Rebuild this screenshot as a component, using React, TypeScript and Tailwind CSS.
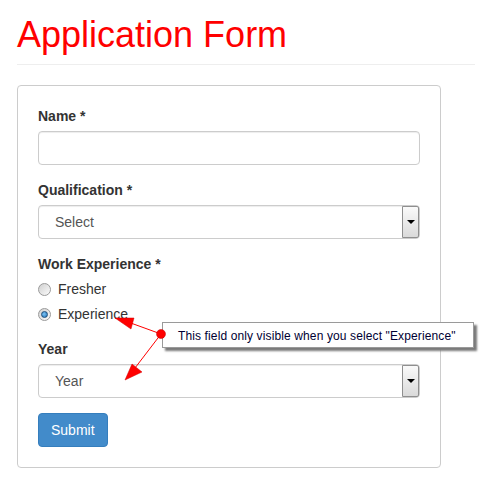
import React from "react";

function FakeSelect({ value }: { value: string }) {
  return (
    <div className="flex h-[34px] w-full items-stretch rounded border border-[#ccc] bg-white shadow-[inset_0_1px_1px_rgba(0,0,0,0.075)]">
      <div className="flex flex-1 items-center pl-[16px] pt-[2px] text-[14px] text-[#555]">{value}</div>
      <div className="flex w-[17px] items-center justify-center rounded-r-[2px] border border-[#8f8f8f] bg-[linear-gradient(180deg,#fafafa,#dadada)]">
        <div className="h-0 w-0 border-x-[4px] border-t-[4px] border-x-transparent border-t-black" />
      </div>
    </div>
  );
}

function Radio({ label, checked }: { label: string; checked?: boolean }) {
  return (
    <div className="flex h-5 items-center">
      <span className="mt-[1px] flex h-[13px] w-[13px] items-center justify-center rounded-full border border-[#9a9a9a] bg-[linear-gradient(135deg,#d0d0d0,#fbfbfb)]">
        {checked && (
          <span className="h-[7px] w-[7px] rounded-full border border-[#1d4f7c] bg-[radial-gradient(circle_at_40%_40%,#7cc4f5,#1f6fb5)]" />
        )}
      </span>
      <span className="ml-[7px] pt-[2px] text-[14px] text-[#333]">{label}</span>
    </div>
  );
}

export default function App() {
  return (
    <div className="relative h-[485px] w-[485px] overflow-hidden bg-white font-['Liberation_Sans',Arial,sans-serif] text-[#333]">
      <div className="ml-[17px] w-[458px]">
        <div className="border-b border-[#eee] pb-[9px] pt-[15px]">
          <h1 className="text-[36px] leading-[1.1] text-[#ff0000]">Application Form</h1>
        </div>

        <div className="mt-5 w-[424px] rounded border border-[#ccc] p-5">
          <div className="mb-[5px] text-[14px] font-bold leading-5">Name *</div>
          <div className="h-[34px] w-full rounded border border-[#ccc] shadow-[inset_0_1px_1px_rgba(0,0,0,0.075)]" />

          <div className="mb-[5px] mt-[15px] text-[14px] font-bold leading-5">Qualification *</div>
          <FakeSelect value="Select" />

          <div className="mb-[5px] mt-[15px] text-[14px] font-bold leading-5">Work Experience *</div>
          <div className="flex flex-col gap-[5px]">
            <Radio label="Fresher" />
            <Radio label="Experience" checked />
          </div>

          <div className="mb-[5px] mt-[15px] text-[14px] font-bold leading-5">Year</div>
          <FakeSelect value="Year" />

          <button className="mt-[15px] h-[34px] rounded border border-[#357ebd] bg-[#428bca] px-3 pt-[2px] text-[14px] text-white">
            Submit
          </button>
        </div>
      </div>

      {/* annotation */}
      <div className="absolute left-[162px] top-[322px] flex h-[26px] w-[312px] items-center border border-[#9a9a9a] bg-white pl-[15px] pt-[1px] text-[12px] tracking-[0.12px] text-[#000033] shadow-[3px_3px_2px_#7a7a7a]">
        This field only visible when you select "Experience"
      </div>
      <svg className="pointer-events-none absolute left-0 top-0" width="485" height="485" viewBox="0 0 485 485">
        <line x1="161" y1="334" x2="128" y2="322" stroke="#ff0000" strokeWidth="1" />
        <line x1="161" y1="334" x2="135" y2="368" stroke="#ff0000" strokeWidth="1" />
        <polygon points="115,318 134,318 131,329" fill="#ff0000" stroke="#d00000" strokeWidth="0.5" />
        <polygon points="125,380 132,364 142,372" fill="#ff0000" stroke="#d00000" strokeWidth="0.5" />
        <circle cx="161" cy="334" r="4.5" fill="#ff0000" stroke="#c00000" strokeWidth="0.5" />
      </svg>
    </div>
  );
}
